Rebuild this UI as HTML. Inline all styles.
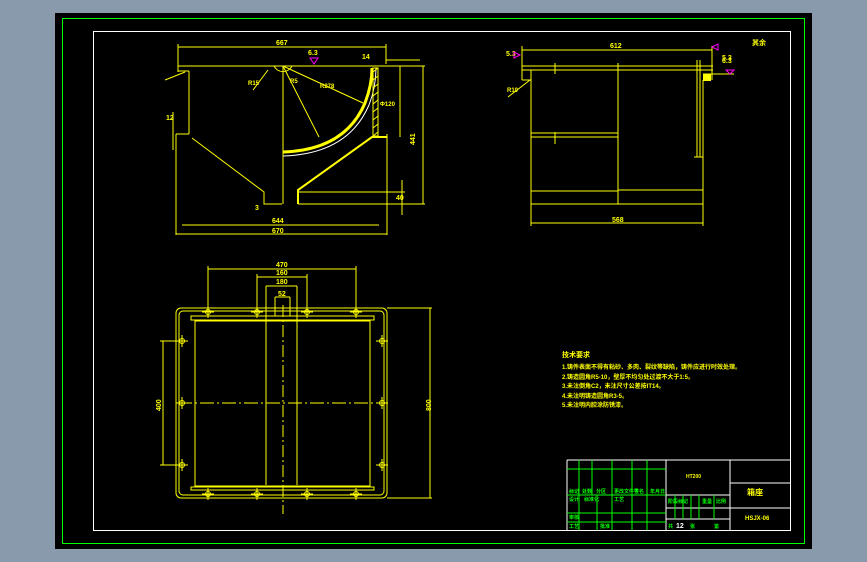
<!DOCTYPE html>
<html><head><meta charset="utf-8"><style>
html,body{margin:0;padding:0;background:#8a9aad;width:867px;height:562px;overflow:hidden}
svg{display:block}
text{font-family:"Liberation Sans","Noto Sans CJK SC",sans-serif;font-weight:bold}
</style></head><body>
<svg width="867" height="562" viewBox="0 0 867 562">
<rect x="55" y="13" width="757" height="536" fill="#000"/>
<rect x="62.5" y="18.5" width="742" height="525" fill="none" stroke="#00ff00" stroke-width="1"/>
<rect x="93.5" y="31.5" width="697" height="499" fill="none" stroke="#fff" stroke-width="1"/>

<g stroke="#ffff00" stroke-width="1" fill="none">
<!-- FRONT VIEW -->
<line x1="178" y1="47" x2="386" y2="47"/>
<line x1="178" y1="44" x2="178" y2="72"/>
<line x1="386" y1="44" x2="386" y2="64"/>
<line x1="178" y1="66" x2="425" y2="66"/>
<line x1="189" y1="71" x2="189" y2="134"/>
<line x1="178" y1="71" x2="189" y2="71"/>
<line x1="189" y1="134" x2="176" y2="134"/>
<polyline points="192,138 264,192 264,204 282,204"/>
<line x1="283" y1="66" x2="283" y2="204"/>
<path d="M283 152 Q345 150 365 103 Q372 85 372 68" stroke-width="3"/>
<path d="M283 156 Q348 154 369 105 Q376 87 376 68" stroke="#fff" stroke-width="1"/>
<rect x="373" y="68" width="5" height="68" fill="none"/>
<path d="M373 72 L378 68 M373 80 L378 76 M373 88 L378 84 M373 96 L378 92 M373 104 L378 100 M373 112 L378 108 M373 120 L378 116 M373 128 L378 124 M373 136 L378 132"/>
<polyline points="298,204 298,190 372,137 387,137" stroke-width="2"/>
<line x1="283" y1="66" x2="363" y2="103"/>
<line x1="283" y1="66" x2="319" y2="137"/>
<line x1="268" y1="70" x2="253" y2="90"/>
<path d="M274 66 A10 10 0 0 0 292 66"/>
<line x1="176" y1="134" x2="176" y2="235"/>
<line x1="387" y1="134" x2="387" y2="235"/>
<line x1="182" y1="225" x2="379" y2="225"/>
<line x1="176" y1="234" x2="387" y2="234"/>
<line x1="298" y1="192" x2="405" y2="192"/>
<line x1="298" y1="204" x2="425" y2="204"/>
<line x1="423" y1="66" x2="423" y2="204"/>
<line x1="400" y1="66" x2="400" y2="137"/>
<line x1="402" y1="180" x2="402" y2="215"/>
<line x1="386" y1="60" x2="420" y2="60"/>
<line x1="173" y1="112" x2="173" y2="150"/>
<line x1="165" y1="80" x2="185" y2="72"/>

<!-- SIDE VIEW -->
<line x1="522" y1="50" x2="712" y2="50"/>
<line x1="522" y1="46" x2="522" y2="80"/>
<line x1="712" y1="46" x2="712" y2="80"/>
<line x1="522" y1="66" x2="713" y2="66"/>
<line x1="522" y1="70" x2="713" y2="70"/>
<line x1="522" y1="80" x2="531" y2="80"/>
<line x1="531" y1="70" x2="531" y2="204"/>
<line x1="703" y1="80" x2="703" y2="204"/>
<line x1="618" y1="63" x2="618" y2="204"/>
<line x1="531" y1="133" x2="618" y2="133"/>
<line x1="531" y1="137" x2="618" y2="137"/>
<line x1="531" y1="191" x2="618" y2="191"/>
<line x1="618" y1="190" x2="703" y2="190"/>
<line x1="531" y1="204" x2="703" y2="204"/>
<line x1="531" y1="223" x2="703" y2="223"/>
<line x1="531" y1="204" x2="531" y2="226"/>
<line x1="703" y1="204" x2="703" y2="226"/>
<line x1="697" y1="60" x2="697" y2="157"/>
<line x1="700" y1="60" x2="700" y2="157"/>
<line x1="694" y1="157" x2="703" y2="157"/>
<line x1="703" y1="74" x2="734" y2="74"/>
<line x1="555" y1="63" x2="555" y2="74"/>
<line x1="555" y1="132" x2="555" y2="144"/>
<line x1="508" y1="97" x2="530" y2="80"/>
<rect x="703" y="74" width="8" height="7" fill="#ffff00" stroke="none"/>

<!-- PLAN VIEW -->
<rect x="176" y="308" width="211" height="190" rx="5"/>
<rect x="179" y="311" width="205" height="184" rx="4"/>
<rect x="191" y="316" width="183" height="4"/>
<rect x="191" y="487" width="183" height="3"/>
<rect x="195" y="321" width="175" height="165"/>
<line x1="266" y1="286" x2="266" y2="485"/>
<line x1="297" y1="286" x2="297" y2="485"/>
<line x1="283" y1="305" x2="283" y2="514" stroke-dasharray="12,3,2,3"/>
<line x1="178" y1="403" x2="386" y2="403" stroke-dasharray="14,3,2,3"/>
<line x1="208" y1="269" x2="356" y2="269"/>
<line x1="208" y1="266" x2="208" y2="318"/>
<line x1="356" y1="266" x2="356" y2="318"/>
<line x1="257" y1="277" x2="307" y2="277"/>
<line x1="257" y1="274" x2="257" y2="318"/>
<line x1="307" y1="274" x2="307" y2="318"/>
<line x1="266" y1="286" x2="297" y2="286"/>
<line x1="275" y1="297" x2="290" y2="297"/>
<line x1="275" y1="297" x2="275" y2="316"/>
<line x1="290" y1="297" x2="290" y2="316"/>
<line x1="387" y1="308" x2="432" y2="308"/>
<line x1="387" y1="498" x2="432" y2="498"/>
<line x1="430" y1="308" x2="430" y2="498"/>
<line x1="160" y1="341" x2="188" y2="341"/>
<line x1="160" y1="465" x2="188" y2="465"/>
<line x1="163" y1="341" x2="163" y2="465"/>
<g>
<circle cx="208" cy="312" r="2.5"/><circle cx="257" cy="312" r="2.5"/><circle cx="307" cy="312" r="2.5"/><circle cx="356" cy="312" r="2.5"/>
<circle cx="208" cy="494" r="2.5"/><circle cx="257" cy="494" r="2.5"/><circle cx="307" cy="494" r="2.5"/><circle cx="356" cy="494" r="2.5"/>
<circle cx="182" cy="341" r="2.5"/><circle cx="182" cy="403" r="2.5"/><circle cx="182" cy="465" r="2.5"/>
<circle cx="382" cy="341" r="2.5"/><circle cx="382" cy="403" r="2.5"/><circle cx="382" cy="465" r="2.5"/>
<path d="M202 312h12M208 306v12M251 312h12M257 306v12M301 312h12M307 306v12M350 312h12M356 306v12M202 494h12M208 488v12M251 494h12M257 488v12M301 494h12M307 488v12M350 494h12M356 488v12M176 341h12M182 335v12M176 403h12M182 397v12M176 465h12M182 459v12M376 341h12M382 335v12M376 403h12M382 397v12M376 465h12M382 459v12"/>
</g>
</g>

<g fill="#ffff00" font-size="7">
<text x="276" y="45">667</text>
<text x="308" y="55">6.3</text>
<text x="362" y="59">14</text>
<text x="380" y="106" font-size="6">Φ120</text>
<text x="410" y="140" transform="rotate(-90 415 140)">441</text>
<text x="396" y="200">40</text>
<text x="272" y="223">644</text>
<text x="272" y="233">670</text>
<text x="255" y="210">3</text>
<text x="166" y="120">12</text>
<text x="248" y="85" font-size="6">R15</text>
<text x="290" y="83" font-size="6">R5</text>
<text x="320" y="88" font-size="6">R278</text>
<text x="610" y="48">612</text>
<text x="612" y="222">568</text>
<text x="506" y="56">5.3</text>
<text x="722" y="60">5.3</text>
<text x="722" y="63">6.3</text>
<text x="752" y="45">其余</text>
<text x="507" y="92" font-size="6">R10</text>
<text x="276" y="267">470</text>
<text x="276" y="275">160</text>
<text x="276" y="284">180</text>
<text x="278" y="296">52</text>
<text x="420" y="406" transform="rotate(-90 428 403)">800</text>
<text x="150" y="406" transform="rotate(-90 158 403)">400</text>
</g>
<g fill="#ff00ff" stroke="#ff00ff" stroke-width="1">
<polygon points="310,58 318,58 314,64" fill="none"/>
<polygon points="514,52 514,58 520,55" fill="none"/>
<polygon points="718,44 718,50 712,47" fill="none"/>
<polygon points="726,70 734,70 730,74" fill="none"/>
</g>

<!-- NOTES -->
<g fill="#ffff00" font-size="6">
<text x="562" y="357" font-size="7">技术要求</text>
<text x="562" y="369">1.铸件表面不得有粘砂、多肉、裂纹等缺陷，铸件应进行时效处理。</text>
<text x="562" y="379">2.铸造圆角R5-10，壁厚不均匀处过渡不大于1:5。</text>
<text x="562" y="388">3.未注倒角C2，未注尺寸公差按IT14。</text>
<text x="562" y="398">4.未注明铸造圆角R3-5。</text>
<text x="562" y="407">5.未注明内腔涂防锈漆。</text>
</g>

<!-- TITLE BLOCK -->
<g stroke="#fff" stroke-width="1" fill="none">
<line x1="567" y1="460" x2="791" y2="460"/>
<line x1="567" y1="460" x2="567" y2="530"/>
<line x1="666" y1="460" x2="666" y2="530"/>
<line x1="730" y1="460" x2="730" y2="530"/>
<line x1="666" y1="495" x2="730" y2="495"/>
<line x1="666" y1="508" x2="730" y2="508"/>
<line x1="666" y1="519" x2="730" y2="519"/>
<line x1="730" y1="483" x2="791" y2="483"/>
<line x1="730" y1="508" x2="791" y2="508"/>
</g>
<g stroke="#00ff00" stroke-width="1">
<line x1="567" y1="469" x2="666" y2="469"/>
<line x1="567" y1="495" x2="666" y2="495"/>
<line x1="567" y1="513" x2="666" y2="513"/>
<line x1="567" y1="522" x2="666" y2="522"/>
<line x1="579" y1="460" x2="579" y2="530"/>
<line x1="592" y1="460" x2="592" y2="495"/>
<line x1="597" y1="495" x2="597" y2="530"/>
<line x1="612" y1="460" x2="612" y2="530"/>
<line x1="632" y1="460" x2="632" y2="530"/>
<line x1="647" y1="460" x2="647" y2="530"/>
<line x1="675" y1="495" x2="675" y2="519"/>
<line x1="683" y1="495" x2="683" y2="519"/>
<line x1="691" y1="495" x2="691" y2="519"/>
<line x1="699" y1="495" x2="699" y2="519"/>
<line x1="714" y1="495" x2="714" y2="519"/>
</g>
<g fill="#00ff00" font-size="5">
<text x="569" y="493">标记</text><text x="582" y="493">处数</text><text x="596" y="493">分区</text><text x="614" y="493">更改文件号</text><text x="634" y="493">签名</text><text x="650" y="493">年月日</text>
<text x="569" y="501">设计</text><text x="584" y="501">标准化</text><text x="614" y="501">工艺</text>
<text x="569" y="519">审核</text><text x="569" y="528">工艺</text><text x="600" y="528">批准</text>
<text x="668" y="503">阶段标记</text><text x="702" y="503">重量</text><text x="716" y="503">比例</text>
<text x="668" y="528">共</text><text x="690" y="528">张</text><text x="714" y="528">第</text>
</g>
<g fill="#ffff00">
<text x="686" y="478" font-size="5">HT200</text>
<text x="747" y="495" font-size="8">箱座</text>
<text x="745" y="520" font-size="6">HSJX-06</text>
</g>
<text x="676" y="528" font-size="7" fill="#fff">12</text>
</svg>
</body></html>
